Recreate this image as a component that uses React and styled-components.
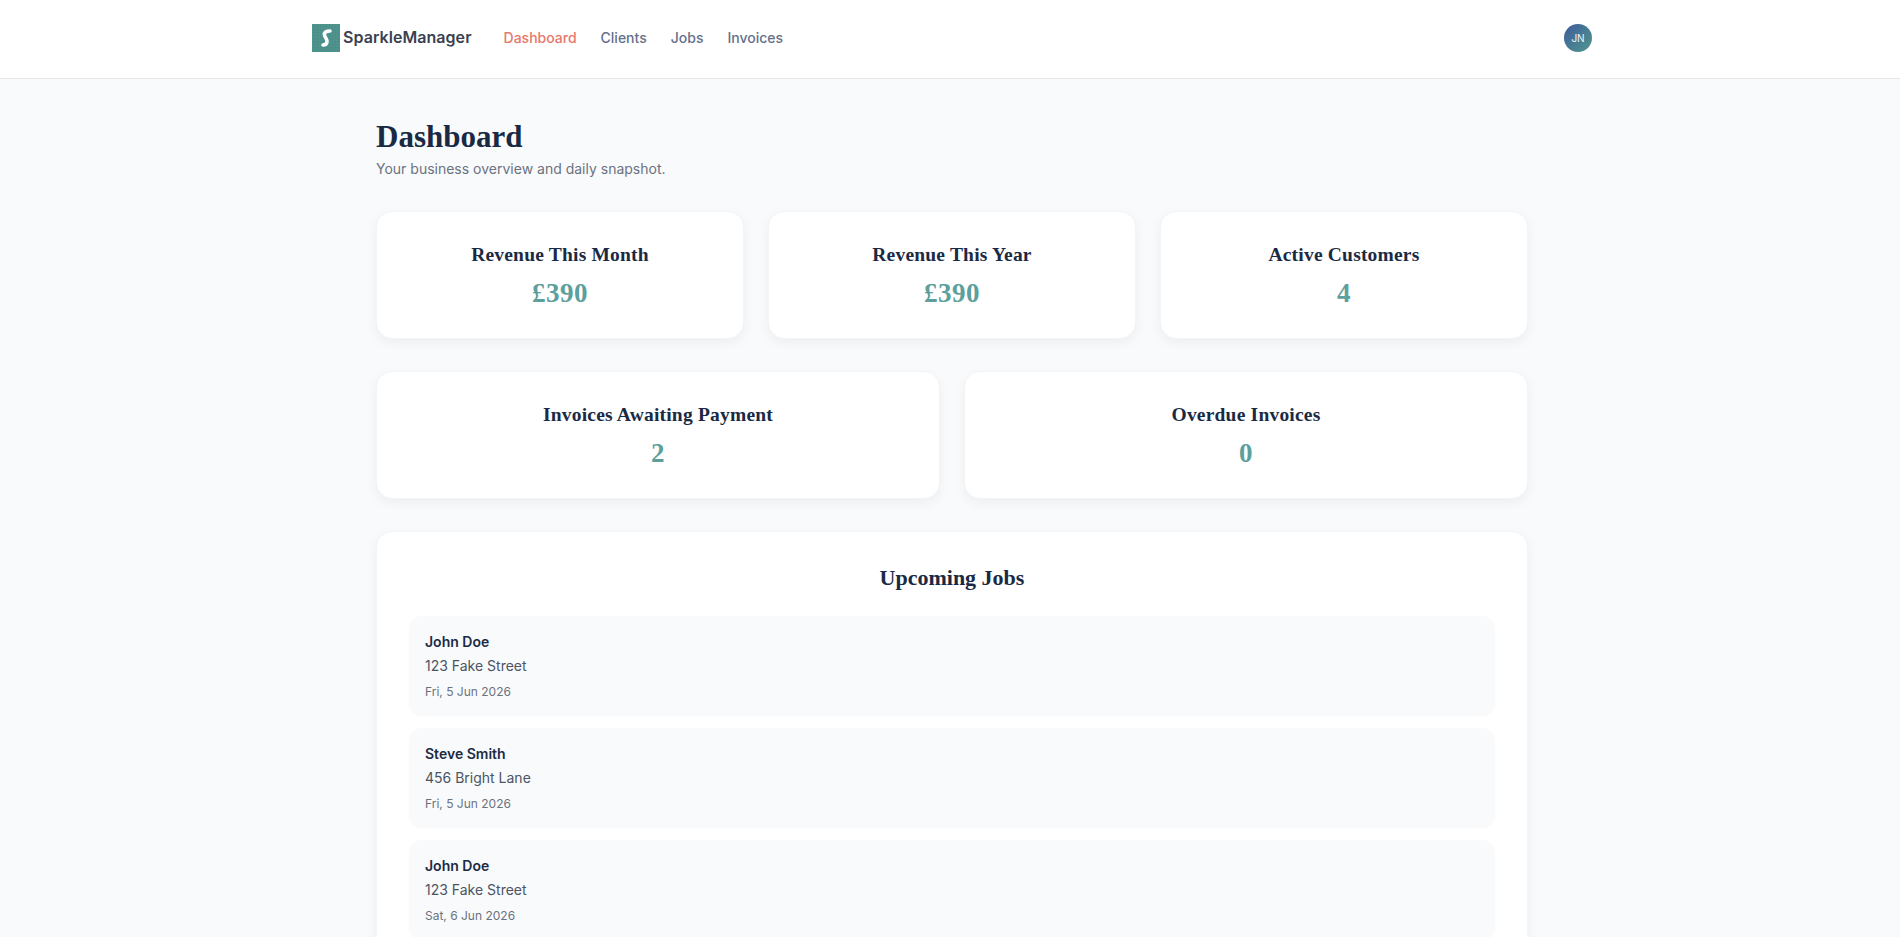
import styled, { createGlobalStyle } from "styled-components";

const GlobalStyle = createGlobalStyle`
  html {
    overflow-x: hidden;
  }
  body {
    margin: 0;
    width: 1904px;
    background: #f9fafb;
    font-family: Inter, "Liberation Sans", sans-serif;
    color: #1a2a44;
  }
`;

const serif = `"Liberation Serif", "Times New Roman", serif`;

const Header = styled.header`
  background: #fff;
  border-bottom: 1px solid #e5e7eb;
`;

const HeaderInner = styled.div`
  width: 1280px;
  margin: 0 auto;
  padding: 24px 0 26px;
  display: flex;
  align-items: center;
  justify-content: space-between;
`;

const LeftGroup = styled.div`
  display: flex;
  align-items: center;
`;

const Brand = styled.a`
  display: flex;
  align-items: center;
  gap: 3px;
  margin-right: 32px;
  font-size: 16px;
  font-weight: 600;
  letter-spacing: 0.05px;
  color: #3a4150;
`;

const BrandName = styled.span`
  padding-bottom: 2px;
`;

const Nav = styled.nav`
  display: flex;
  gap: 24px;
  padding-bottom: 2px;
`;

const NavLink = styled.a`
  font-size: 14px;
  font-weight: 500;
  color: ${(p) => (p.$active ? "#e8776a" : "#64708a")};
`;

const Avatar = styled.div`
  width: 28px;
  height: 28px;
  border-radius: 50%;
  background: linear-gradient(135deg, #3f5a9c, #4f9a8c);
  color: #f1f5f9;
  font-size: 10px;
  font-weight: 400;
  display: flex;
  align-items: center;
  justify-content: center;
`;

const Main = styled.main`
  width: 1152px;
  margin: 0 auto;
  padding: 40px 0 48px;
`;

const PageTitle = styled.h1`
  margin: 0;
  font-family: ${serif};
  font-size: 31px;
  line-height: 36px;
  font-weight: 700;
  color: #1a2a44;
`;

const Subtitle = styled.p`
  margin: 4px 0 32px;
  font-size: 14px;
  line-height: 20px;
  color: #6b7280;
`;

const CardGrid = styled.div`
  display: grid;
  grid-template-columns: repeat(${(p) => p.$cols}, 1fr);
  gap: 24px;
  margin-bottom: 32px;
`;

const Card = styled.div`
  background: #fff;
  border: 1px solid #f3f4f6;
  border-radius: 16px;
  box-shadow: 0 4px 12px rgba(0, 0, 0, 0.05);
  text-align: center;
  padding: 29px 24px;
`;

const CardTitle = styled.h3`
  margin: 0 0 8px;
  font-family: ${serif};
  font-size: 19.5px;
  line-height: 28px;
  font-weight: 700;
  letter-spacing: 0.2px;
  color: #1a2a44;
`;

const CardValue = styled.div`
  font-family: ${serif};
  font-size: 27px;
  line-height: 32px;
  font-weight: 700;
  letter-spacing: 0.5px;
  color: #5c9f9c;
`;

const Panel = styled.section`
  background: #fff;
  border: 1px solid #f3f4f6;
  border-radius: 16px;
  box-shadow: 0 4px 12px rgba(0, 0, 0, 0.05);
  padding: 32px;
`;

const PanelTitle = styled.h2`
  margin: 0 0 24px;
  font-family: ${serif};
  font-size: 22px;
  line-height: 28px;
  font-weight: 700;
  text-align: center;
  color: #1a2a44;
`;

const JobList = styled.div`
  display: flex;
  flex-direction: column;
  gap: 12px;
`;

const JobRow = styled.div`
  background: #f9fafb;
  border-radius: 12px;
  padding: 16px;
`;

const JobName = styled.div`
  font-size: 14px;
  line-height: 20px;
  font-weight: 600;
  color: #1a2a44;
`;

const JobAddress = styled.div`
  margin-top: 4px;
  font-size: 14px;
  line-height: 20px;
  color: #4b5563;
`;

const JobDate = styled.div`
  margin-top: 8px;
  font-size: 12px;
  line-height: 16px;
  color: #6b7280;
`;

const Logo = () => (
  <svg width="28" height="28" viewBox="0 0 28 28">
    <defs>
      <pattern id="dots" width="3" height="3" patternUnits="userSpaceOnUse">
        <rect width="3" height="3" fill="#4a8f89" />
        <circle cx="1" cy="1" r="0.5" fill="#6aa9a3" />
      </pattern>
    </defs>
    <rect width="28" height="28" fill="url(#dots)" />
    <path
      d="M18 7C14 7 12 8.500 12.500 11C13 14 15.500 15 15 18C14.700 20 13 21 11 21"
      fill="none"
      stroke="#fff"
      strokeWidth="3.6"
      strokeLinecap="round"
    />
  </svg>
);

const topCards = [
  { title: "Revenue This Month", value: "£390" },
  { title: "Revenue This Year", value: "£390" },
  { title: "Active Customers", value: "4" },
];

const bottomCards = [
  { title: "Invoices Awaiting Payment", value: "2" },
  { title: "Overdue Invoices", value: "0" },
];

const jobs = [
  { name: "John Doe", address: "123 Fake Street", date: "Fri, 5 Jun 2026" },
  { name: "Steve Smith", address: "456 Bright Lane", date: "Fri, 5 Jun 2026" },
  { name: "John Doe", address: "123 Fake Street", date: "Sat, 6 Jun 2026" },
];

const App = () => {
  return (
    <div>
      <GlobalStyle />
      <Header>
        <HeaderInner>
          <LeftGroup>
            <Brand>
              <Logo />
              <BrandName>SparkleManager</BrandName>
            </Brand>
            <Nav>
              <NavLink $active>Dashboard</NavLink>
              <NavLink>Clients</NavLink>
              <NavLink>Jobs</NavLink>
              <NavLink>Invoices</NavLink>
            </Nav>
          </LeftGroup>
          <Avatar>JN</Avatar>
        </HeaderInner>
      </Header>
      <Main>
        <PageTitle>Dashboard</PageTitle>
        <Subtitle>Your business overview and daily snapshot.</Subtitle>
        <CardGrid $cols={3}>
          {topCards.map((c) => (
            <Card key={c.title}>
              <CardTitle>{c.title}</CardTitle>
              <CardValue>{c.value}</CardValue>
            </Card>
          ))}
        </CardGrid>
        <CardGrid $cols={2}>
          {bottomCards.map((c) => (
            <Card key={c.title}>
              <CardTitle>{c.title}</CardTitle>
              <CardValue>{c.value}</CardValue>
            </Card>
          ))}
        </CardGrid>
        <Panel>
          <PanelTitle>Upcoming Jobs</PanelTitle>
          <JobList>
            {jobs.map((j, i) => (
              <JobRow key={i}>
                <JobName>{j.name}</JobName>
                <JobAddress>{j.address}</JobAddress>
                <JobDate>{j.date}</JobDate>
              </JobRow>
            ))}
          </JobList>
        </Panel>
      </Main>
    </div>
  );
};

export default App;
